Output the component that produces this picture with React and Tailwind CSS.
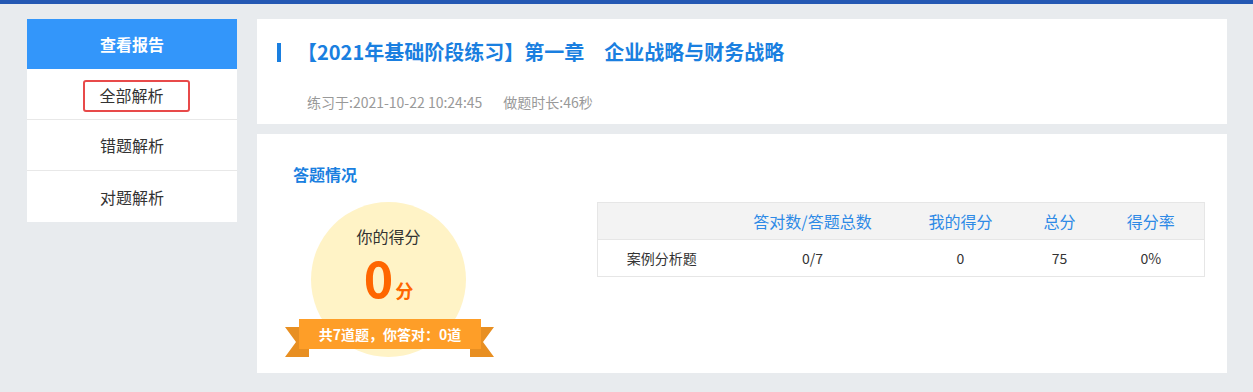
import React from "react";

const rows = [
  { name: "案例分析题", ratio: "0/7", score: "0", total: "75", rate: "0%" },
];

function Ribbon() {
  return (
    <>
      <svg className="absolute left-[-26px] top-[125px]" width="24" height="30" viewBox="0 0 24 30">
        <polygon points="0,0 24,0 24,30 0,30 11,15" fill="#e88f22" />
      </svg>
      <svg className="absolute left-[159px] top-[125px]" width="24" height="30" viewBox="0 0 24 30">
        <polygon points="0,0 24,0 13,15 24,30 0,30" fill="#e88f22" />
      </svg>
      <div className="absolute left-[-12px] top-[117px] flex h-[30px] w-[182px] items-center justify-center bg-[#fe9e28] text-[14px] font-bold leading-[30px] text-white">
        共7道题，你答对：0道
      </div>
    </>
  );
}

export default function App() {
  return (
    <div className="h-[392px] w-[1253px] overflow-hidden bg-[#e8ebee] font-['Microsoft_YaHei','Noto_Sans_CJK_SC',sans-serif]">
      <div className="h-[4px] bg-[#2458b3]" />
      <div className="flex items-start gap-[20px] pl-[27px] pt-[15px]">
        <aside className="w-[210px] shrink-0 bg-white">
          <div className="flex h-[50px] items-center justify-center bg-[#3396fa] text-[16px] font-bold text-white">查看报告</div>
          <div className="flex h-[51px] items-center justify-center border-b border-[#e8e8e8]">
            <span className="flex h-[32px] w-[107px] translate-x-[4px] translate-y-[2px] items-center justify-center rounded-[3px] border-2 border-[#e84a4a] pb-[3px] pr-[9px] text-[16px] text-[#333]">全部解析</span>
          </div>
          <div className="flex h-[51px] items-center justify-center border-b border-[#e8e8e8] text-[16px] text-[#333]">错题解析</div>
          <div className="flex h-[51px] items-center justify-center text-[16px] text-[#333]">对题解析</div>
        </aside>

        <main className="flex w-[970px] flex-col gap-[10px]">
          <section className="h-[105px] bg-white pl-[20px] pt-[21px]">
            <div className="flex items-center">
              <span className="h-[19px] w-[4px] bg-[#1a7fe0]" />
              <h1 className="ml-[16px] text-[20px] font-bold leading-[24px] text-[#1a7fe0]">【2021年基础阶段练习】第一章　企业战略与财务战略</h1>
            </div>
            <div className="mt-[29px] flex gap-[21px] pl-[30px] text-[14px] leading-[18px] text-[#999]">
              <span>练习于:2021-10-22 10:24:45</span>
              <span>做题时长:46秒</span>
            </div>
          </section>

          <section className="h-[239px] bg-white pl-[36px] pr-[22px] pt-[30px]">
            <h2 className="text-[16px] font-bold leading-[20px] text-[#1a7fe0]">答题情况</h2>
            <div className="mt-[18px] flex items-start">
              <div className="relative ml-[18px] flex h-[155px] w-[155px] flex-col items-center rounded-full bg-[#fff3c6] pt-[24px]">
                <div className="text-[16px] leading-[20px] text-[#333]">你的得分</div>
                <div className="mt-[8px] flex items-baseline text-[#ff6600]">
                  <span className="text-[50px] font-bold leading-[44px]">0</span>
                  <span className="ml-[2px] text-[18px] font-bold">分</span>
                </div>
                <Ribbon />
              </div>

              <table className="ml-auto w-[608px] border-collapse border border-[#e6e6e6] text-center">
                <thead>
                  <tr className="h-[37px] bg-[#f3f3f3] text-[16px] text-[#2e8ae6]">
                    <th className="w-[128px] font-normal" />
                    <th className="w-[174px] font-normal">答对数/答题总数</th>
                    <th className="w-[122px] font-normal">我的得分</th>
                    <th className="w-[76px] font-normal">总分</th>
                    <th className="font-normal">得分率</th>
                  </tr>
                </thead>
                <tbody>
                  {rows.map((r) => (
                    <tr key={r.name} className="h-[37px] border-t border-[#e6e6e6] text-[14px] text-[#333]">
                      <td>{r.name}</td>
                      <td>{r.ratio}</td>
                      <td>{r.score}</td>
                      <td>{r.total}</td>
                      <td>{r.rate}</td>
                    </tr>
                  ))}
                </tbody>
              </table>
            </div>
          </section>
        </main>
      </div>
    </div>
  );
}
